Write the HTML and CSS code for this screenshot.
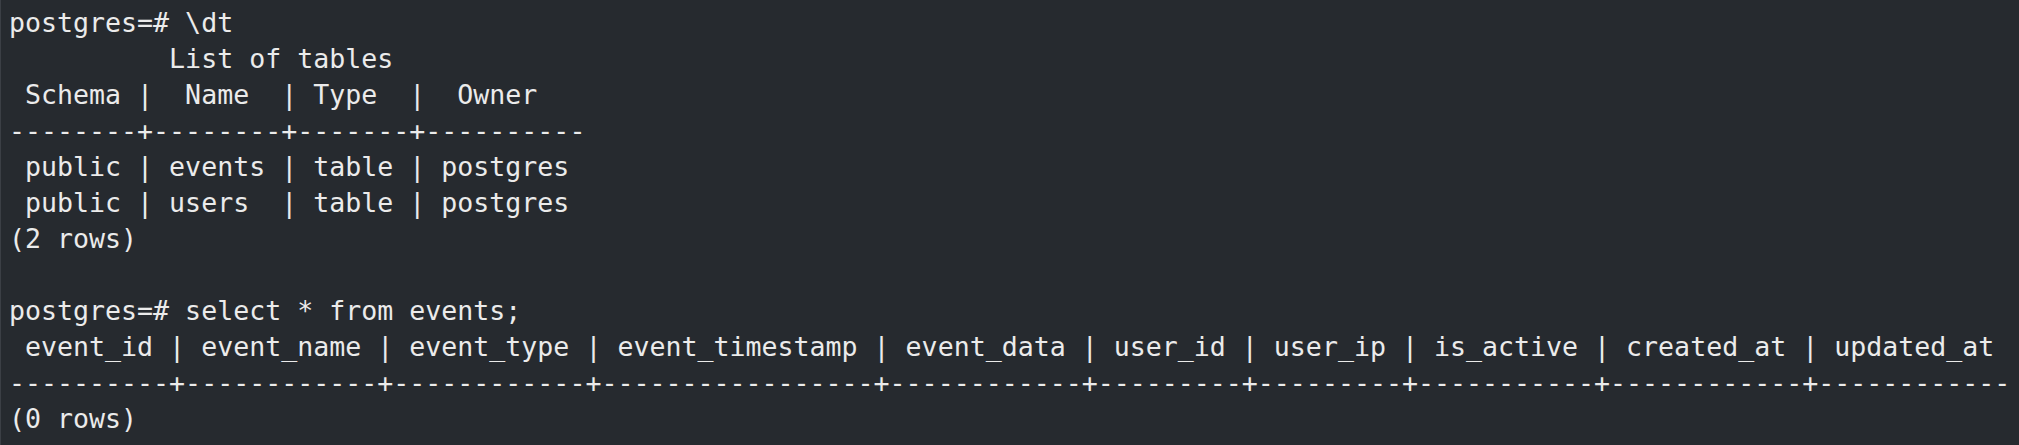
FILE: index.html
```html
<!DOCTYPE html>
<html>
<head>
<meta charset="utf-8">
<link rel="stylesheet" href="styles.css">
</head>
<body>
<div class="terminal">
<pre class="output">postgres=# \dt
          List of tables
 Schema |  Name  | Type  |  Owner
--------+--------+-------+----------
 public | events | table | postgres
 public | users  | table | postgres
(2 rows)

postgres=# select * from events;
 event_id | event_name | event_type | event_timestamp | event_data | user_id | user_ip | is_active | created_at | updated_at
----------+------------+------------+-----------------+------------+---------+---------+-----------+------------+------------
(0 rows)
</pre>
</div>
</body>
</html>
```
FILE: styles.css
```css
html, body {
  margin: 0;
  padding: 0;
  background: #262a2f;
}
.terminal {
  width: 2019px;
  height: 445px;
  box-sizing: border-box;
  border-left: 1px solid #3b3f45;
  background: #262a2f;
  padding: 5px 0 0 8px;
  overflow: hidden;
}
.output {
  margin: 0;
  font-family: "DejaVu Sans Mono", monospace;
  font-size: 26.6px;
  line-height: 36px;
  color: #ebebeb;
  white-space: pre;
}
```
